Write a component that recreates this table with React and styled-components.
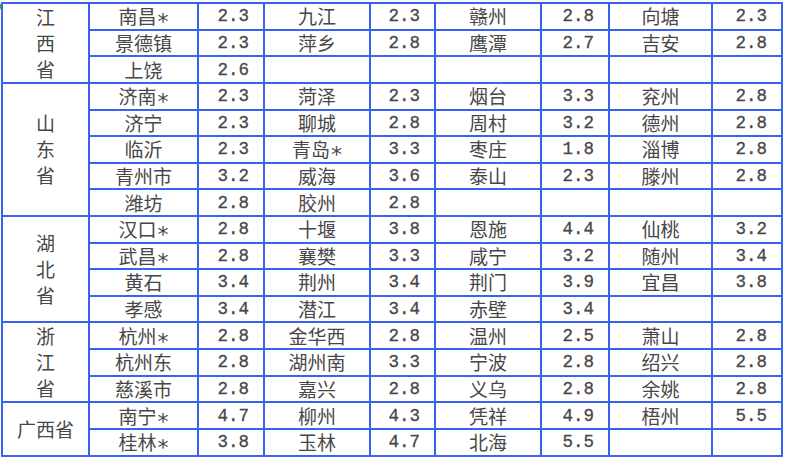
import React from "react";
import styled, { createGlobalStyle } from "styled-components";

const GlobalStyle = createGlobalStyle`
  html, body {
    margin: 0;
    padding: 0;
    background: #fff;
  }
`;

const Page = styled.div`
  position: relative;
  padding: 2px 0 0 1px;
`;

const CornerMark = styled.span`
  position: absolute;
  left: 0;
  top: 4px;
  width: 0;
  height: 0;
  border-top: 6px solid #2fa35a;
  border-right: 3px solid transparent;
`;

const Table = styled.table`
  border-collapse: collapse;
  table-layout: fixed;
  width: 780px;
  border: 2px solid #3a62f0;
  font-family: "Noto Sans CJK SC", "Noto Sans", sans-serif;
  color: #474747;
`;

const Row = styled.tr`
  height: 26.6px;
`;

const Cell = styled.td`
  padding: 0;
  border: 2px solid #3a62f0;
  border-left-color: ${(p) => (p.$thin ? "#5a80f5" : "#3a62f0")};
  font-size: 19px;
  line-height: 20px;
  text-align: center;
  white-space: nowrap;
`;

const NumCell = styled(Cell)`
  font-family: "Liberation Mono", monospace;
  font-size: 17.5px;
  text-align: right;
  padding-right: 14px;
  -webkit-text-stroke: 0.3px #474747;
`;

const ProvCell = styled(Cell)`
  line-height: 26px;
`;

const ProvChar = styled.span`
  display: block;
`;

const Star = styled.span`
  font-family: "DejaVu Sans", sans-serif;
  font-size: 22px;
  line-height: 0;
  vertical-align: -5px;
  margin-left: 1px;
`;

const colWidths = [87, 109, 66, 106, 65, 106, 68, 103, 70];

const provinces = [
  {
    name: "江西省",
    vertical: true,
    rows: [
      [["南昌*", "2.3"], ["九江", "2.3"], ["赣州", "2.8"], ["向塘", "2.3"]],
      [["景德镇", "2.3"], ["萍乡", "2.8"], ["鹰潭", "2.7"], ["吉安", "2.8"]],
      [["上饶", "2.6"]],
    ],
  },
  {
    name: "山东省",
    vertical: true,
    rows: [
      [["济南*", "2.3"], ["菏泽", "2.3"], ["烟台", "3.3"], ["兖州", "2.8"]],
      [["济宁", "2.3"], ["聊城", "2.8"], ["周村", "3.2"], ["德州", "2.8"]],
      [["临沂", "2.3"], ["青岛*", "3.3"], ["枣庄", "1.8"], ["淄博", "2.8"]],
      [["青州市", "3.2"], ["威海", "3.6"], ["泰山", "2.3"], ["滕州", "2.8"]],
      [["潍坊", "2.8"], ["胶州", "2.8"]],
    ],
  },
  {
    name: "湖北省",
    vertical: true,
    rows: [
      [["汉口*", "2.8"], ["十堰", "3.8"], ["恩施", "4.4"], ["仙桃", "3.2"]],
      [["武昌*", "2.8"], ["襄樊", "3.3"], ["咸宁", "3.2"], ["随州", "3.4"]],
      [["黄石", "3.4"], ["荆州", "3.4"], ["荆门", "3.9"], ["宜昌", "3.8"]],
      [["孝感", "3.4"], ["潜江", "3.4"], ["赤壁", "3.4"]],
    ],
  },
  {
    name: "浙江省",
    vertical: true,
    rows: [
      [["杭州*", "2.8"], ["金华西", "2.8"], ["温州", "2.5"], ["萧山", "2.8"]],
      [["杭州东", "2.8"], ["湖州南", "3.3"], ["宁波", "2.8"], ["绍兴", "2.8"]],
      [["慈溪市", "2.8"], ["嘉兴", "2.8"], ["义乌", "2.8"], ["余姚", "2.8"]],
    ],
  },
  {
    name: "广西省",
    vertical: false,
    rows: [
      [["南宁*", "4.7"], ["柳州", "4.3"], ["凭祥", "4.9"], ["梧州", "5.5"]],
      [["桂林*", "3.8"], ["玉林", "4.7"], ["北海", "5.5"]],
    ],
  },
];

function ProvinceLabel({ name, vertical }) {
  if (!vertical) return name;
  return name.split("").map((ch, i) => <ProvChar key={i}>{ch}</ProvChar>);
}

function CityName({ name }) {
  if (!name.endsWith("*")) return name;
  return (
    <>
      {name.slice(0, -1)}
      <Star>*</Star>
    </>
  );
}

function ProvinceRows({ province }) {
  return province.rows.map((row, r) => {
    const pairs = [0, 1, 2, 3].map((i) => row[i] || ["", ""]);
    return (
      <Row key={r}>
        {r === 0 && (
          <ProvCell rowSpan={province.rows.length}>
            <ProvinceLabel name={province.name} vertical={province.vertical} />
          </ProvCell>
        )}
        {pairs.map(([city, value], i) => (
          <React.Fragment key={i}>
            <Cell>
              <CityName name={city} />
            </Cell>
            <NumCell $thin>{value}</NumCell>
          </React.Fragment>
        ))}
      </Row>
    );
  });
}

export default function App() {
  return (
    <Page>
      <GlobalStyle />
      <CornerMark />
      <Table>
        <colgroup>
          {colWidths.map((w, i) => (
            <col key={i} style={{ width: w }} />
          ))}
        </colgroup>
        <tbody>
          {provinces.map((p) => (
            <ProvinceRows key={p.name} province={p} />
          ))}
        </tbody>
      </Table>
    </Page>
  );
}
